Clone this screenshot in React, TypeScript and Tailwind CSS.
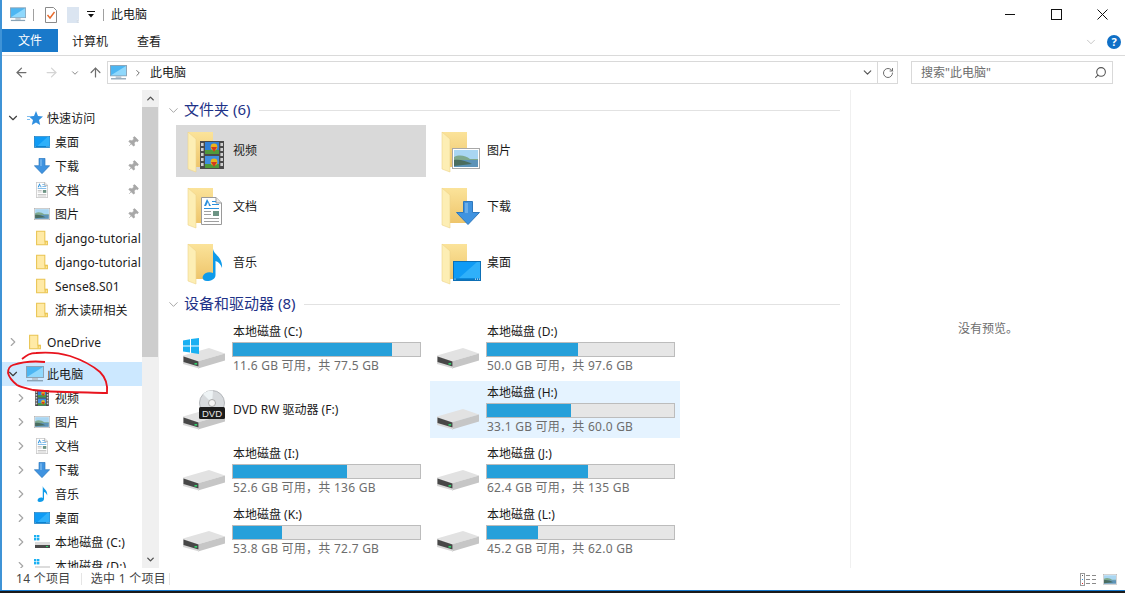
import { ArrowLeft, ArrowRight, ArrowUp, ChevronDown, ChevronRight, ChevronUp, Pin, RotateCw, Search } from "lucide-react"
import type { ReactNode } from "react"

type IconProps = { className?: string }

function MonitorIcon({ className }: IconProps) {
  return (
    <svg viewBox="0 0 18 16" className={className}>
      <rect x="0.5" y="0.5" width="17" height="11" fill="#4db6f2" stroke="#8ba3b5" />
      <path d="M1 11 L17 1 V11 Z" fill="#8fd8fc" />
      <rect x="6" y="12" width="6" height="2" fill="#b9c6d0" />
      <rect x="1" y="14" width="16" height="1.4" fill="#8ba3b5" />
    </svg>
  )
}

function SmallFolder({ className }: IconProps) {
  return (
    <svg viewBox="0 0 14 17" className={className}>
      <path d="M0.7 0.7 H10.3 V12.3 H13.3 V16.3 H0.7 Z" fill="#ffeaa6" stroke="#e9c34f" strokeWidth="1.2" />
      <path d="M10.5 16 V12.5 H13" fill="#f6d36a" stroke="#e9c34f" />
    </svg>
  )
}

function BigFolder({ className }: IconProps) {
  return (
    <svg viewBox="0 0 48 48" className={className}>
      <defs>
        <linearGradient id="folderBack" x1="0" y1="0" x2="0" y2="1">
          <stop offset="0" stopColor="#fbe39a" />
          <stop offset="1" stopColor="#eec56b" />
        </linearGradient>
      </defs>
      <path d="M5 5 H30 V40 H12 Z" fill="url(#folderBack)" />
      <path d="M5 5 L13 12 V45 L5 42 Z" fill="#fdeeb4" stroke="#eed48a" strokeWidth="0.6" />
    </svg>
  )
}

function FilmIcon({ className }: IconProps) {
  return (
    <svg viewBox="0 0 24 28" className={className}>
      <rect width="24" height="28" fill="#4a4a4a" />
      <rect x="5" y="1" width="14" height="12" fill="#2f7fd6" />
      <rect x="5" y="15" width="14" height="12" fill="#3f8fe0" />
      <rect x="5" y="9" width="14" height="4" fill="#4f9a3c" />
      <rect x="5" y="23" width="14" height="4" fill="#4f9a3c" />
      <circle cx="14" cy="6" r="3.4" fill="#e9b21c" />
      <path d="M11 6 H17 L14 11 Z" fill="#d2391f" />
      <circle cx="14" cy="21" r="3.4" fill="#e9b21c" />
      <path d="M11 21 H17 L14 26 Z" fill="#d2391f" />
      {[2, 7, 12, 17, 22].map((y) => (
        <g key={y}>
          <rect x="1" y={y} width="2.6" height="3" fill="#cfcfcf" />
          <rect x="20.4" y={y} width="2.6" height="3" fill="#cfcfcf" />
        </g>
      ))}
    </svg>
  )
}

function PictureIcon({ className }: IconProps) {
  return (
    <svg viewBox="0 0 28 21" className={className}>
      <rect x="0.5" y="0.5" width="27" height="20" fill="#fff" stroke="#a8a8a8" />
      <rect x="2" y="2" width="24" height="10" fill="#a9d6f2" />
      <path d="M2 9 C8 6 14 8 18 11 H26 V13 H2 Z" fill="#7fa98d" />
      <rect x="2" y="12" width="24" height="7" fill="#5d93b8" />
      <path d="M2 12 C8 11 14 13 20 16 L2 18 Z" fill="#4a6d5f" />
    </svg>
  )
}

function DocIcon({ className }: IconProps) {
  return (
    <svg viewBox="0 0 21 28" className={className}>
      <path d="M0.5 0.5 H15 L20.5 6 V27.5 H0.5 Z" fill="#fff" stroke="#9a9a9a" />
      <path d="M15 0.5 V6 H20.5" fill="#e8e8e8" stroke="#9a9a9a" />
      <path d="M6 2 L3 9 H5 L7 5 L8 9 H10 Z" fill="#2a8fdc" />
      <rect x="11" y="4" width="4" height="1" fill="#2a8fdc" />
      <rect x="11" y="7" width="7" height="1" fill="#2a8fdc" />
      <rect x="3" y="11" width="15" height="1" fill="#2a8fdc" />
      <rect x="3" y="14" width="7" height="1" fill="#a0a0a0" />
      <rect x="12" y="14" width="6" height="5" fill="#6d9484" />
      <rect x="3" y="17" width="7" height="1" fill="#a0a0a0" />
      <rect x="3" y="21" width="15" height="1" fill="#a0a0a0" />
      <rect x="3" y="24" width="15" height="1" fill="#a0a0a0" />
    </svg>
  )
}

function DownIcon({ className }: IconProps) {
  return (
    <svg viewBox="0 0 24 24" className={className}>
      <path d="M7.5 0.5 H16.5 V11.5 H23.5 L12 23.5 L0.5 11.5 H7.5 Z" fill="#3f93e0" stroke="#2f78bd" />
      <rect x="9" y="2" width="3" height="10" fill="#69aeea" />
    </svg>
  )
}

function MusicIcon({ className }: IconProps) {
  return (
    <svg viewBox="0 0 21 32" className={className}>
      <path d="M11 0 C12 6 21 8 20 19 C19 16 17 13 13.5 12 V26 C13.5 30 9 32 5 32 C1 32 0 29 1 27 C2 24 7 22 11 24 Z" fill="#0f9bea" />
    </svg>
  )
}

function DesktopIcon({ className }: IconProps) {
  return (
    <svg viewBox="0 0 28 20" className={className}>
      <rect x="0.5" y="0.5" width="27" height="19" fill="#0f9bf5" stroke="#0d6fb5" />
      <path d="M6 17 L24 1 H27 V17 Z" fill="#2fb0fa" />
      <rect x="1" y="17.5" width="26" height="1.5" fill="#0a78c2" />
      <rect x="1.5" y="17.6" width="1" height="1" fill="#fff" />
      <rect x="22" y="17.6" width="1" height="1" fill="#fff" />
      <rect x="24" y="17.6" width="1" height="1" fill="#fff" />
      <rect x="26" y="17.6" width="1" height="1" fill="#fff" />
    </svg>
  )
}

function DriveBody() {
  return (
    <>
      <path d="M0 7.5 L26 0 L42 5.5 L16 13 Z" fill="#e2e2e2" />
      <path d="M16 13 L42 5.5 V12.5 L15 20.5 Z" fill="#c6c6c6" />
      <path d="M0 7.5 L16 13 V20.5 L0 16 Z" fill="#d8d8d8" />
      <path d="M0.5 8.5 L15.5 13.5 V18.5 L0.5 14 Z" fill="#474747" />
      <rect x="11.5" y="15" width="2.6" height="1.6" fill="#2fd36a" />
    </>
  )
}

function DriveIcon({ className }: IconProps) {
  return (
    <svg viewBox="0 0 42 21" className={className}>
      <DriveBody />
    </svg>
  )
}

function WinLogo({ className }: IconProps) {
  return (
    <svg viewBox="0 0 16 16" className={className}>
      <path d="M0 2.4 L7 1.3 V7.4 H0 Z M8 1.1 L16 0 V7.4 H8 Z M0 8.4 H7 V14.5 L0 13.4 Z M8 8.4 H16 V16 L8 14.7 Z" fill="#19b0f2" />
    </svg>
  )
}

function DvdIcon({ className }: IconProps) {
  return (
    <svg viewBox="0 0 42 40" className={className}>
      <g transform="translate(0 19)">
        <DriveBody />
      </g>
      <circle cx="29" cy="13" r="12.5" fill="#d7dadd" stroke="#b3b6ba" />
      <path d="M29 13 L20 4 A12.5 12.5 0 0 1 30 0.5 Z" fill="#eef3f5" />
      <circle cx="29" cy="13" r="3.5" fill="#f4f4f4" stroke="#a9a9a9" />
      <rect x="16" y="17" width="26" height="12" rx="1.5" fill="#1c1c1c" />
      <text x="29" y="26.5" textAnchor="middle" fontSize="9.5" fill="#e6e6e6" fontFamily='"Liberation Sans", sans-serif'>DVD</text>
    </svg>
  )
}

function SmallDrive({ className }: IconProps) {
  return (
    <svg viewBox="0 0 16 14" className={className}>
      <rect x="0" y="0" width="2.4" height="2.4" fill="#19b0f2" />
      <rect x="3" y="0" width="2.4" height="2.4" fill="#19b0f2" />
      <rect x="0" y="3" width="2.4" height="2.4" fill="#19b0f2" />
      <rect x="3" y="3" width="2.4" height="2.4" fill="#19b0f2" />
      <rect x="1" y="7" width="15" height="3" fill="#dcdcdc" />
      <rect x="1" y="10" width="15" height="3" fill="#4a4a4a" />
      <rect x="12" y="11" width="2" height="1" fill="#2fd36a" />
    </svg>
  )
}

function CheckDoc({ className }: IconProps) {
  return (
    <svg viewBox="0 0 12 16" className={className}>
      <path d="M0.5 0.5 H8.5 L11.5 3.5 V15.5 H0.5 Z" fill="#fff" stroke="#8a8a8a" />
      <path d="M2.5 8 L5 11 L9.5 5" fill="none" stroke="#e8692a" strokeWidth="1.4" />
    </svg>
  )
}

function BlankDoc({ className }: IconProps) {
  return (
    <svg viewBox="0 0 12 16" className={className}>
      <path d="M0 0 H12 V12.5 H10 V16 H0 Z" fill="#dbe5f1" />
      <path d="M10.4 13 H12 V16 H10.4 Z" fill="none" stroke="#c3cfdd" strokeWidth="0.7" />
    </svg>
  )
}

type NavRow = {
  label: string
  icon?: ReactNode
  level: 0 | 1
  chevron?: "open" | "closed"
  pinned?: boolean
  selected?: boolean
  className?: string
}

const treeIconBox = "w-[18px] h-[18px] flex items-center justify-center shrink-0"

const navRows: NavRow[] = [
  { label: "快速访问", level: 0, chevron: "open", icon: <svg viewBox="0 0 16 16" className="w-4 h-4"><path d="M9 1 L11 6 L16 6.5 L12 10 L13.2 15 L9 12.4 L4.8 15 L6 10 L2 6.5 L7 6 Z" fill="#2f8fe0" /><rect x="0" y="6" width="4" height="1" fill="#7dbdf0" /><rect x="0" y="9" width="3" height="1" fill="#7dbdf0" /></svg> },
  { label: "桌面", level: 1, pinned: true, icon: <DesktopIcon className="w-4 h-3" /> },
  { label: "下载", level: 1, pinned: true, icon: <DownIcon className="w-4 h-4" /> },
  { label: "文档", level: 1, pinned: true, icon: <DocIcon className="w-3 h-4" /> },
  { label: "图片", level: 1, pinned: true, icon: <PictureIcon className="w-4 h-3" /> },
  { label: "django-tutorial", level: 1, icon: <SmallFolder className="w-3 h-4" /> },
  { label: "django-tutorial", level: 1, icon: <SmallFolder className="w-3 h-4" /> },
  { label: "Sense8.S01", level: 1, icon: <SmallFolder className="w-3 h-4" /> },
  { label: "浙大读研相关", level: 1, icon: <SmallFolder className="w-3 h-4" /> },
  { label: "OneDrive", level: 0, chevron: "closed", className: "mt-2", icon: <SmallFolder className="w-3 h-4" /> },
  { label: "此电脑", level: 0, chevron: "open", selected: true, className: "mt-2", icon: <MonitorIcon className="w-[18px] h-4" /> },
  { label: "视频", level: 1, chevron: "closed", icon: <FilmIcon className="w-[14px] h-4" /> },
  { label: "图片", level: 1, chevron: "closed", icon: <PictureIcon className="w-4 h-3" /> },
  { label: "文档", level: 1, chevron: "closed", icon: <DocIcon className="w-3 h-4" /> },
  { label: "下载", level: 1, chevron: "closed", icon: <DownIcon className="w-4 h-4" /> },
  { label: "音乐", level: 1, chevron: "closed", icon: <MusicIcon className="w-[11px] h-4" /> },
  { label: "桌面", level: 1, chevron: "closed", icon: <DesktopIcon className="w-4 h-3" /> },
  { label: "本地磁盘 (C:)", level: 1, chevron: "closed", icon: <SmallDrive className="w-4 h-[14px]" /> },
  { label: "本地磁盘 (D:)", level: 1, chevron: "closed", icon: <SmallDrive className="w-4 h-[14px]" /> },
]

const folders = [
  { label: "视频", selected: true, overlay: <FilmIcon className="absolute left-[17px] top-[14px] w-6 h-7" /> },
  { label: "图片", overlay: <PictureIcon className="absolute left-[15px] top-[21px] w-7 h-[21px]" /> },
  { label: "文档", overlay: <DocIcon className="absolute left-[18px] top-[14px] w-[21px] h-7" /> },
  { label: "下载", overlay: <DownIcon className="absolute left-[19px] top-[18px] w-6 h-6" /> },
  { label: "音乐", overlay: <MusicIcon className="absolute left-[19px] top-[10px] w-[21px] h-8" /> },
  { label: "桌面", overlay: <DesktopIcon className="absolute left-[16px] top-[22px] w-7 h-5" /> },
]

const drives = [
  { label: "本地磁盘 (C:)", free: "11.6 GB 可用，共 77.5 GB", pct: 85, win: true },
  { label: "本地磁盘 (D:)", free: "50.0 GB 可用，共 97.6 GB", pct: 48.6 },
  { label: "DVD RW 驱动器 (F:)", dvd: true },
  { label: "本地磁盘 (H:)", free: "33.1 GB 可用，共 60.0 GB", pct: 45, hover: true },
  { label: "本地磁盘 (I:)", free: "52.6 GB 可用，共 136 GB", pct: 61 },
  { label: "本地磁盘 (J:)", free: "62.4 GB 可用，共 135 GB", pct: 54 },
  { label: "本地磁盘 (K:)", free: "53.8 GB 可用，共 72.7 GB", pct: 26 },
  { label: "本地磁盘 (L:)", free: "45.2 GB 可用，共 62.0 GB", pct: 27.5 },
]

function SectionHeader({ title, className }: { title: string; className?: string }) {
  return (
    <div className={`flex items-center h-5 pr-[10px] ${className ?? ""}`}>
      <ChevronDown className="w-[15px] h-[15px] ml-px text-[#8a8a8a]" strokeWidth={1.2} />
      <span className="ml-[3px] pb-[2px] text-[15px] leading-5 text-[#1e3287] whitespace-nowrap">{title}</span>
      <div className="flex-1 h-px bg-[#e2e2e2] ml-[9px]" />
    </div>
  )
}

export default function App() {
  return (
    <div
      className="relative w-[1125px] h-[593px] overflow-hidden flex flex-col bg-white text-xs text-[#1a1a1a]"
      style={{ fontFamily: '"Noto Sans", "Noto Sans CJK SC", sans-serif' }}
    >
      <div className="flex-1 min-h-0 flex flex-col border-l-2 border-[#3f93d6]">
        {/* Title bar */}
        <div className="h-[29px] flex items-center shrink-0">
          <MonitorIcon className="w-4 h-[15px] ml-2" />
          <div className="w-px h-3 bg-[#a0a0a0] ml-[7px]" />
          <CheckDoc className="w-3 h-4 ml-[11px]" />
          <BlankDoc className="w-3 h-4 ml-[10px]" />
          <svg viewBox="0 0 8 7" className="w-2 h-[7px] ml-2"><path d="M0 0 H8 V1 H0 Z M1 3 H7 L4 6.5 Z" fill="#111" /></svg>
          <div className="w-px h-3 bg-[#a0a0a0] ml-2" />
          <span className="ml-[7px]">此电脑</span>
          <div className="ml-auto flex">
            <div className="w-[46px] h-[26px] flex items-center justify-center"><div className="w-[10px] h-px bg-[#111]" /></div>
            <div className="w-[46px] h-[26px] flex items-center justify-center"><div className="w-[11px] h-[11px] border border-[#111]" /></div>
            <div className="w-[46px] h-[26px] flex items-center justify-center">
              <svg viewBox="0 0 11 11" className="w-[11px] h-[11px]"><path d="M0.5 0.5 L10.5 10.5 M10.5 0.5 L0.5 10.5" stroke="#111" fill="none" /></svg>
            </div>
          </div>
        </div>

        {/* Ribbon tabs */}
        <div className="h-[27px] flex items-start shrink-0 border-b border-[#dadada]">
          <div className="w-14 h-[23px] bg-[#1979ca] text-white flex items-center justify-center">文件</div>
          <div className="ml-[14px] h-[25px] flex items-center">计算机</div>
          <div className="ml-[29px] h-[25px] flex items-center">查看</div>
          <ChevronDown className="ml-auto mt-[6px] w-[14px] h-[14px] text-[#b0b0b0]" strokeWidth={1.2} />
          <div className="ml-[9px] mr-[4px] mt-[6px] w-[14px] h-[14px] rounded-full bg-[#0f6fc6] text-white text-[11px] leading-[14px] font-bold text-center">?</div>
        </div>

        {/* Address bar */}
        <div className="h-[34px] flex items-center shrink-0 pb-[1px]">
          <ArrowLeft className="w-[15px] h-[15px] ml-[12px] text-[#6d6d6d]" strokeWidth={2} />
          <ArrowRight className="w-[15px] h-[15px] ml-[15px] text-[#d4d4d4]" strokeWidth={2} />
          <ChevronDown className="w-[10px] h-[10px] ml-[11px] text-[#8a8a8a]" strokeWidth={2.4} />
          <ArrowUp className="w-[15px] h-[15px] ml-[8px] text-[#6d6d6d]" strokeWidth={2} />
          <div className="ml-[4px] w-[791px] h-[23px] border border-[#d9d9d9] flex items-center">
            <MonitorIcon className="w-[17px] h-[15px] ml-[2px]" />
            <ChevronRight className="w-[10px] h-[10px] ml-[6px] text-[#6d6d6d]" strokeWidth={2.4} />
            <span className="ml-[7px]">此电脑</span>
            <ChevronDown className="ml-auto mr-[3px] w-[13px] h-[13px] text-[#555]" strokeWidth={2.2} />
            <div className="w-[20px] h-full border-l border-[#d9d9d9] flex items-center justify-center">
              <RotateCw className="w-[12px] h-[12px] text-[#6d6d6d]" strokeWidth={2} />
            </div>
          </div>
          <div className="ml-[13px] w-[202px] h-[23px] border border-[#d9d9d9] flex items-center pl-[9px] pr-[5px] text-[#6d6d6d]">
            <span>搜索"此电脑"</span>
            <Search className="ml-auto w-[13px] h-[13px] text-[#555] -scale-x-100" strokeWidth={2} />
          </div>
        </div>

        {/* Main area */}
        <div className="flex-1 min-h-0 flex">
          {/* Navigation pane */}
          <div className="w-[156px] shrink-0 flex">
            <div className="w-[140px] pt-4 overflow-hidden">
              {navRows.map((row, i) => (
                <div
                  key={i}
                  className={`h-6 flex items-center whitespace-nowrap overflow-hidden ${row.level === 0 ? "pl-[4px]" : "pl-[12px]"} ${row.selected ? "bg-[#cce8ff]" : ""} ${row.className ?? ""}`}
                >
                  <div className="w-[14px] flex justify-center shrink-0">
                    {row.chevron === "open" && <ChevronDown className="w-[14px] h-[14px] text-[#404040]" strokeWidth={2} />}
                    {row.chevron === "closed" && <ChevronRight className="w-[14px] h-[14px] text-[#a6a6a6]" strokeWidth={2} />}
                  </div>
                  <div className={`${treeIconBox} ${row.level === 0 ? "ml-[6px]" : "ml-[5px]"}`}>{row.icon}</div>
                  <span className={`pt-[2px] tracking-[0.1px] ${row.level === 0 ? "ml-[3px]" : "ml-[4px]"}`}>{row.label}</span>
                  {row.pinned && <Pin className="ml-auto mr-[3px] w-3 h-3 text-[#a8a8a8] fill-[#a8a8a8] rotate-45" strokeWidth={1.4} />}
                </div>
              ))}
            </div>
            <div className="w-4 bg-[#f0f0f0] flex flex-col">
              <div className="h-[17px] flex items-center justify-center"><ChevronUp className="w-[11px] h-[11px] text-[#505050]" strokeWidth={3} /></div>
              <div className="h-[250px] bg-[#cdcdcd]" />
              <div className="mt-auto h-[17px] flex items-center justify-center"><ChevronDown className="w-[11px] h-[11px] text-[#505050]" strokeWidth={3} /></div>
            </div>
          </div>

          {/* Content */}
          <div className="w-[692px] shrink-0 pt-[10px] pl-[6px] border-l border-[#f0f0f0] overflow-hidden">
            <SectionHeader title="文件夹 (6)" />
            <div className="mt-[5px] ml-[11px] grid grid-cols-[250px_250px] gap-1">
              {folders.map((f) => (
                <div key={f.label} className={`h-[52px] flex items-center pl-[7px] ${f.selected ? "bg-[#d9d9d9]" : ""}`}>
                  <div className="relative w-12 h-12 shrink-0">
                    <BigFolder className="w-12 h-12" />
                    {f.overlay}
                  </div>
                  <span className="ml-[2px]">{f.label}</span>
                </div>
              ))}
            </div>
            <SectionHeader title="设备和驱动器 (8)" className="mt-[5px]" />
            <div className="mt-[6px] ml-[11px] grid grid-cols-[250px_250px] gap-1">
              {drives.map((d) => (
                <div key={d.label} className={`h-[57px] flex items-center pl-[7px] ${d.hover ? "bg-[#e5f3ff]" : ""}`}>
                  <div className="relative w-12 h-12 shrink-0">
                    {d.dvd ? (
                      <DvdIcon className="absolute left-0 top-[4px] w-[42px] h-10" />
                    ) : (
                      <DriveIcon className="absolute left-0 top-[23px] w-[42px] h-[21px]" />
                    )}
                    {d.win && <WinLogo className="absolute left-0 top-[13px] w-4 h-4" />}
                  </div>
                  {d.dvd ? (
                    <span className="ml-[2px]">{d.label}</span>
                  ) : (
                    <div className="ml-[1px] w-[189px] flex flex-col">
                      <span className="leading-[15px] pl-px">{d.label}</span>
                      <div className="h-[15px] mt-[3px] bg-[#e6e6e6] border border-[#bcbcbc]">
                        <div className="h-full bg-[#26a0da]" style={{ width: `${d.pct}%` }} />
                      </div>
                      <span className="leading-[16px] mt-[1px] pl-px tracking-[0.25px] text-[#6d6d6d]">{d.free}</span>
                    </div>
                  )}
                </div>
              ))}
            </div>
          </div>

          {/* Preview pane */}
          <div className="flex-1 border-l border-[#f0f0f0] flex items-start justify-center pt-[231px] text-[#6d6d6d]">
            没有预览。
          </div>
        </div>

        {/* Status bar */}
        <div className="h-[22px] shrink-0 flex items-center bg-white text-[#444] tracking-[0.3px]">
          <span className="ml-[14px]">14 个项目</span>
          <div className="w-px h-3 bg-[#e5e5e5] ml-[10px]" />
          <span className="ml-[9px]">选中 1 个项目</span>
          <div className="w-px h-3 bg-[#e5e5e5] ml-[3px]" />
          <div className="ml-auto flex items-center">
            <svg viewBox="0 0 16 13" className="w-4 h-[13px]">
              <rect x="0.5" y="0.5" width="4" height="12" fill="#fff" stroke="#9a9a9a" />
              <rect x="2" y="2" width="1" height="1" fill="#555" />
              <rect x="2" y="6" width="1" height="1" fill="#2a8fdc" />
              <rect x="2" y="10" width="1" height="1" fill="#d22" />
              <path d="M6 2.5 H10 M12 2.5 H16 M6 6.5 H10 M12 6.5 H16 M6 10.5 H10 M12 10.5 H16" stroke="#8a8a8a" />
            </svg>
            <PictureIcon className="ml-[7px] mr-[8px] w-[14px] h-[11px]" />
          </div>
        </div>
      </div>
      <div className="h-px bg-[#1979ca] shrink-0" />
      <div className="h-[2px] bg-[#1a1a1a] shrink-0" />

      {/* Red marker scribble over the screenshot */}
      <svg viewBox="0 0 1125 593" className="absolute inset-0 w-[1125px] h-[593px] pointer-events-none">
        <path
          d="M22 359 C27 355 30 353 36 353 C48 352 60 353 70 356 C82 360 93 366 100 372 C105 377 108 383 107 393 C95 393 80 392 67 392 C55 392 42 391 33 390 C25 388 20 387 17 385 C12 381 9 377 8 373 C8 369 10 366 13 365 C22 362 35 361 45 362"
          fill="none"
          stroke="#e8141e"
          strokeWidth="1.8"
        />
      </svg>
    </div>
  )
}
